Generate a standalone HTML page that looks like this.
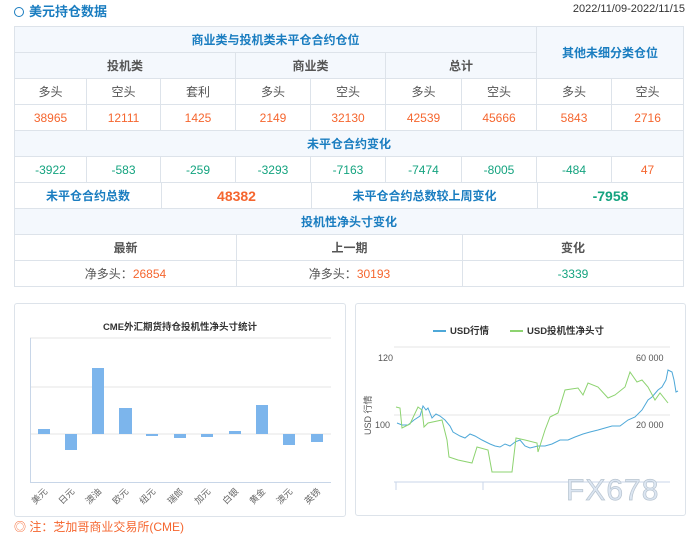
<!DOCTYPE html>
<html><head><meta charset="utf-8">
<style>
*{margin:0;padding:0;box-sizing:border-box}
body{width:695px;height:523px;overflow:hidden;background:#fff;font-family:"Liberation Sans","Noto Sans CJK SC",sans-serif;position:relative}
.title{position:absolute;left:14px;top:1px;font-size:13px;font-weight:bold;color:#1a7dc0}
.title .c{display:inline-block;width:10px;height:10px;border:1.5px solid #1a7dc0;border-radius:50%;margin-right:5px;vertical-align:-1px}
.date{position:absolute;right:10px;top:3px;font-size:11px;color:#333}
table{position:absolute;left:14px;border-collapse:collapse;table-layout:fixed;font-size:12px}
td{border:1px solid #dde3ea;height:26px;text-align:center;color:#555;padding:0}
.h{background:#f4f8fd;color:#1a7dc0;font-weight:bold}
.s{background:#f4f8fd;color:#555;font-weight:bold}
.o{color:#f5662f}.g{color:#14a37f}
.bo{color:#f5662f;font-weight:bold;font-size:14px}.bg{color:#14a37f;font-weight:bold;font-size:14px}
.bl{color:#1a7dc0;font-weight:bold}
.panel{position:absolute;border:1px solid #dde3ea;border-radius:3px;background:#fff}
</style></head><body>
<div class="title"><span class="c"></span>美元持仓数据</div>
<div class="date">2022/11/09-2022/11/15</div>
<table style="top:26px;width:669px">
<colgroup><col style="width:72px"><col style="width:74px"><col style="width:75px"><col style="width:75px"><col style="width:75px"><col style="width:76px"><col style="width:75px"><col style="width:75px"><col style="width:72px"></colgroup>
<tr><td class="h" colspan="7">商业类与投机类未平仓合约仓位</td><td class="h" colspan="2" rowspan="2">其他未细分类仓位</td></tr>
<tr><td class="s" colspan="3">投机类</td><td class="s" colspan="2">商业类</td><td class="s" colspan="2">总计</td></tr>
<tr><td>多头</td><td>空头</td><td>套利</td><td>多头</td><td>空头</td><td>多头</td><td>空头</td><td>多头</td><td>空头</td></tr>
<tr class="o"><td class="o">38965</td><td class="o">12111</td><td class="o">1425</td><td class="o">2149</td><td class="o">32130</td><td class="o">42539</td><td class="o">45666</td><td class="o">5843</td><td class="o">2716</td></tr>
<tr><td class="h" colspan="9">未平仓合约变化</td></tr>
<tr><td class="g">-3922</td><td class="g">-583</td><td class="g">-259</td><td class="g">-3293</td><td class="g">-7163</td><td class="g">-7474</td><td class="g">-8005</td><td class="g">-484</td><td class="o">47</td></tr>
</table>
<table style="top:182px;width:669px">
<colgroup><col style="width:147px"><col style="width:150px"><col style="width:226px"><col style="width:146px"></colgroup>
<tr><td class="bl">未平仓合约总数</td><td class="bo">48382</td><td class="bl">未平仓合约总数较上周变化</td><td class="bg">-7958</td></tr>
<tr><td class="h" colspan="4">投机性净头寸变化</td></tr>
</table>
<table style="top:234px;width:669px">
<colgroup><col style="width:222px"><col style="width:226px"><col style="width:221px"></colgroup>
<tr><td class="s" style="background:#fff">最新</td><td class="s" style="background:#fff">上一期</td><td class="s" style="background:#fff">变化</td></tr>
<tr><td>净多头：<span class="o">26854</span></td><td>净多头：<span class="o">30193</span></td><td class="g">-3339</td></tr>
</table>

<div class="panel" style="left:14px;top:303px;width:332px;height:214px"></div>
<svg style="position:absolute;left:0;top:0" width="695" height="523">
<text x="180" y="330" font-size="9.5" text-anchor="middle" fill="#333" font-family="Liberation Sans,Noto Sans CJK SC,sans-serif" font-weight="bold">CME外汇期货持仓投机性净头寸统计</text>
<line x1="30" y1="338" x2="331" y2="338" stroke="#e6e6e6"/>
<line x1="30" y1="387" x2="331" y2="387" stroke="#e6e6e6"/>
<line x1="30" y1="434" x2="331" y2="434" stroke="#e6e6e6"/>
<line x1="30.5" y1="338" x2="30.5" y2="482" stroke="#c8d6e8"/>
<line x1="30" y1="482.5" x2="331" y2="482.5" stroke="#c8d6e8"/>
<g fill="#7cb5ec">
<rect x="38" y="429" width="12" height="5"/><rect x="65" y="434" width="12" height="16"/>
<rect x="92" y="368" width="12" height="66"/><rect x="119" y="408" width="13" height="26"/>
<rect x="146" y="434" width="12" height="2"/><rect x="174" y="434" width="12" height="4"/>
<rect x="201" y="434" width="12" height="3"/><rect x="229" y="431" width="12" height="3"/>
<rect x="256" y="405" width="12" height="29"/><rect x="283" y="434" width="12" height="11"/>
<rect x="311" y="434" width="12" height="8"/></g>
<g font-size="9" fill="#666" font-family="Liberation Sans,Noto Sans CJK SC,sans-serif">
<text transform="translate(48,492) rotate(-45)" text-anchor="end">美元</text>
<text transform="translate(75,492) rotate(-45)" text-anchor="end">日元</text>
<text transform="translate(102,492) rotate(-45)" text-anchor="end">澳油</text>
<text transform="translate(129,492) rotate(-45)" text-anchor="end">欧元</text>
<text transform="translate(156,492) rotate(-45)" text-anchor="end">纽元</text>
<text transform="translate(184,492) rotate(-45)" text-anchor="end">瑞郎</text>
<text transform="translate(211,492) rotate(-45)" text-anchor="end">加元</text>
<text transform="translate(239,492) rotate(-45)" text-anchor="end">白银</text>
<text transform="translate(266,492) rotate(-45)" text-anchor="end">黄金</text>
<text transform="translate(293,492) rotate(-45)" text-anchor="end">澳元</text>
<text transform="translate(321,492) rotate(-45)" text-anchor="end">英镑</text>
</g>
</svg>
<div class="panel" style="left:355px;top:303px;width:331px;height:213px"></div>
<svg style="position:absolute;left:0;top:0" width="695" height="523">
<line x1="433" y1="331" x2="446" y2="331" stroke="#4ea8d8" stroke-width="2"/>
<text x="450" y="334" font-size="9.5" fill="#333" font-weight="bold" font-family="Liberation Sans,Noto Sans CJK SC,sans-serif">USD行情</text>
<line x1="510" y1="331" x2="523" y2="331" stroke="#8dd370" stroke-width="2"/>
<text x="527" y="334" font-size="9.5" fill="#333" font-weight="bold" font-family="Liberation Sans,Noto Sans CJK SC,sans-serif">USD投机性净头寸</text>
<line x1="394" y1="347" x2="670" y2="347" stroke="#e6e6e6"/>
<line x1="394" y1="415" x2="670" y2="415" stroke="#e6e6e6"/>
<line x1="394" y1="482" x2="670" y2="482" stroke="#c8d6e8"/>
<line x1="396" y1="482" x2="396" y2="490" stroke="#c8d6e8"/><line x1="483" y1="482" x2="483" y2="490" stroke="#c8d6e8"/>
<g font-size="9" fill="#555" font-family="Liberation Sans,sans-serif">
<text x="378" y="361">120</text><text x="375" y="428">100</text>
<text x="636" y="361">60 000</text><text x="636" y="428">20 000</text>
<text transform="translate(371,435) rotate(-90)">USD 行情</text></g>
<polyline fill="none" stroke="#4ea8d8" stroke-width="1" points="397,423 402,425 408,425 414,420 420,416 423,406 426,410 428,408 432,418 436,414 440,416 445,420 450,426 453,432 460,436 465,438 470,434 475,436 482,440 490,444 495,446 500,447 505,444 510,446 515,442 520,440 525,446 530,448 538,446 545,446 552,444 560,440 568,440 575,437 583,434 590,432 598,430 605,428 612,426 620,426 628,420 635,417 642,410 648,400 652,397 658,390 662,387 666,380 668,370 672,372 674,380 676,392 678,391"/>
<polyline fill="none" stroke="#8dd370" stroke-width="1" points="396,407 400,408 402,428 410,424 418,407 422,410 424,427 428,423 442,420 447,440 449,457 458,460 472,463 477,447 488,450 492,472 512,472 516,438 525,440 537,443 538,452 545,430 550,417 558,413 565,390 578,388 583,395 588,383 598,387 608,398 615,395 625,387 630,372 637,382 642,380 648,387 655,400 660,393 668,403"/>
<text x="566" y="500" font-size="30" fill="#dce6f2" stroke="#b8c4d0" stroke-width="0.7" font-family="Liberation Sans,sans-serif" letter-spacing="1">FX678</text>
</svg>
<div style="position:absolute;left:14px;top:518px;font-size:12px;color:#f5662f;white-space:nowrap">◎ 注：芝加哥商业交易所(CME)</div>
</body></html>
